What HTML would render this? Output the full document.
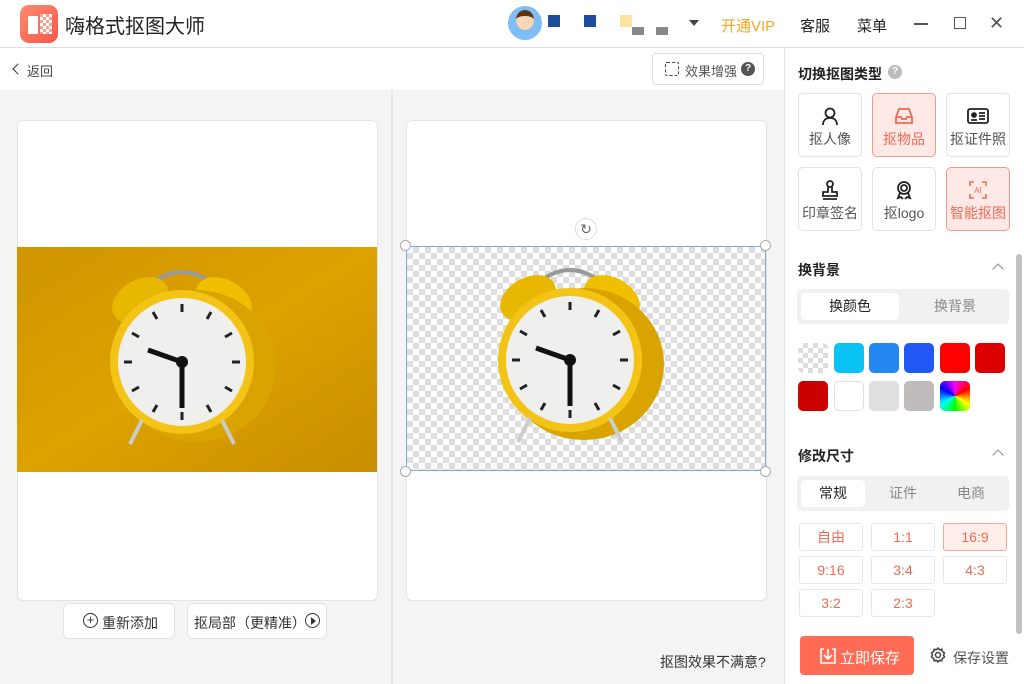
<!DOCTYPE html><html><head><meta charset="utf-8"><style>
*{box-sizing:border-box;margin:0;padding:0}
body{width:1024px;height:684px;overflow:hidden;font-family:"Liberation Sans","Noto Sans CJK SC",sans-serif;background:#fff;position:relative;color:#333}
.a{position:absolute}
.card{background:#fff;border:1px solid #e3e3e3;border-radius:6px}
.type{position:absolute;width:64px;height:64px;border:1px solid #e2e2e2;border-radius:5px;background:#fff;font-size:14px;color:#555;text-align:center}
.type.on{background:#fee9e6;border-color:#f59a8c;color:#f06a55}
.type svg{display:block;margin:12px auto 3px}
.sw{position:absolute;width:30px;height:30px;border-radius:5px}
.sz{position:absolute;width:64px;height:28px;border:1px solid #e8e8e8;border-radius:3px;color:#f06a55;font-size:14px;text-align:center;line-height:26px;background:#fff}
.seg{position:absolute;background:#f1f1f1;border-radius:5px;height:35px;width:212px;left:797px}
.seg div{position:absolute;top:4px;height:27px;line-height:27px;text-align:center;font-size:14px;color:#888}
.seg .s{background:#fff;border-radius:5px;color:#222}
.h{position:absolute;left:798px;font-size:14px;font-weight:bold;color:#222}
.chev{position:absolute;left:994px;width:8px;height:8px;border-left:1.5px solid #888;border-top:1.5px solid #888;transform:rotate(45deg)}
</style></head><body>
<svg width="0" height="0" style="position:absolute"><defs>
<g id="clk">
<path d="M-40,-70 Q0,-110 40,-70" stroke="#999" stroke-width="4" fill="none"/>
<ellipse cx="-42" cy="-62" rx="30" ry="20" fill="#e8b800" transform="rotate(-30 -42 -62)"/>
<ellipse cx="42" cy="-62" rx="30" ry="20" fill="#f0c000" transform="rotate(30 42 -62)"/>
<ellipse cx="14" cy="4" rx="80" ry="76" fill="#d9a400"/>
<circle r="72" fill="#f3c316"/>
<circle r="64" fill="#efefed"/>
<g stroke="#222" stroke-width="3">
<line x1="0" y1="-58" x2="0" y2="-50"/><line x1="0" y1="50" x2="0" y2="58"/><line x1="-58" y1="0" x2="-50" y2="0"/><line x1="50" y1="0" x2="58" y2="0"/>
<line x1="29" y1="-50" x2="25" y2="-43"/><line x1="50" y1="-29" x2="43" y2="-25"/><line x1="-29" y1="50" x2="-25" y2="43"/><line x1="-50" y1="29" x2="-43" y2="25"/>
<line x1="29" y1="50" x2="25" y2="43"/><line x1="50" y1="29" x2="43" y2="25"/><line x1="-29" y1="-50" x2="-25" y2="-43"/><line x1="-50" y1="-29" x2="-43" y2="-25"/>
</g>
<line x1="0" y1="0" x2="-34" y2="-12" stroke="#111" stroke-width="5"/>
<line x1="0" y1="0" x2="0" y2="46" stroke="#111" stroke-width="5"/>
<circle r="6" fill="#111"/>
<line x1="-40" y1="58" x2="-52" y2="82" stroke="#ccc" stroke-width="4"/>
<line x1="40" y1="58" x2="52" y2="82" stroke="#ccc" stroke-width="4"/>
</g></defs></svg>

<!-- title bar -->
<div class="a" style="left:20px;top:5px;width:38px;height:38px;border-radius:9px;background:linear-gradient(135deg,#ff8a6e,#f5584a)"></div>
<div class="a" style="left:28px;top:16px;width:10px;height:18px;background:#fff;border-radius:1px"></div>
<div class="a" style="left:40px;top:14px;width:12px;height:20px;background:repeating-conic-gradient(#fff 0 25%,#f9a08f 0 50%) 0 0/6px 6px"></div>
<div class="a" style="left:65px;top:10px;font-size:20px;color:#222">嗨格式抠图大师</div>
<div class="a" style="left:508px;top:6px;width:34px;height:34px;border-radius:50%;background:#7fbdf5"></div>
<div class="a" style="left:516px;top:10px;width:18px;height:20px;border-radius:50%;background:#f4d6b8;border-top:6px solid #5a3413"></div>
<div class="a" style="left:548px;top:15px;width:12px;height:12px;background:#1d4c9a"></div>
<div class="a" style="left:584px;top:15px;width:12px;height:12px;background:#1d4c9a"></div>
<div class="a" style="left:620px;top:15px;width:12px;height:12px;background:#ffe2a0"></div>
<div class="a" style="left:632px;top:27px;width:12px;height:8px;background:#888"></div>
<div class="a" style="left:656px;top:27px;width:12px;height:8px;background:#888"></div>
<div class="a" style="left:689px;top:20px;border:5px solid transparent;border-top:6px solid #444"></div>
<div class="a" style="left:721px;top:15px;font-size:15px;color:#f5a623">开通VIP</div>
<div class="a" style="left:800px;top:15px;font-size:15px;color:#222">客服</div>
<div class="a" style="left:857px;top:15px;font-size:15px;color:#222">菜单</div>
<div class="a" style="left:914px;top:23px;width:14px;height:1.5px;background:#555"></div>
<div class="a" style="left:954px;top:17px;width:12px;height:12px;border:1.5px solid #555"></div>
<div class="a" style="left:989px;top:13px;font-size:18px;color:#555">✕</div>
<div class="a" style="left:0;top:47px;width:1024px;height:1px;background:#ddd"></div>

<!-- toolbar -->
<div class="a" style="left:14px;top:65px;width:8px;height:8px;border-left:1.5px solid #333;border-bottom:1.5px solid #333;transform:rotate(45deg)"></div>
<div class="a" style="left:27px;top:61px;font-size:13px;color:#444">返回</div>
<div class="a" style="left:652px;top:53px;width:112px;height:32px;border:1px solid #ddd;border-radius:4px;font-size:13px;color:#555;padding:7px 0 0 32px">效果增强</div>
<div class="a" style="left:665px;top:62px;width:14px;height:14px;border:1.5px dashed #444;border-radius:2px"></div>
<div class="a" style="left:741px;top:62px;width:14px;height:14px;border-radius:50%;background:#555;color:#fff;font-size:10px;text-align:center;line-height:14px;font-weight:bold">?</div>

<!-- work area -->
<div class="a" style="left:0;top:90px;width:784px;height:594px;background:#f4f4f4"></div>
<div class="a" style="left:391px;top:90px;width:2px;height:594px;background:#e6e6e6"></div>
<div class="a card" style="left:17px;top:120px;width:361px;height:481px"></div>
<svg class="a" style="left:17px;top:247px" width="360" height="225"><defs><linearGradient id="bg" x1="0" y1="0" x2="1" y2="1"><stop offset="0" stop-color="#d09500"/><stop offset=".5" stop-color="#dca200"/><stop offset="1" stop-color="#c98e00"/></linearGradient></defs><rect width="360" height="225" fill="url(#bg)"/><use href="#clk" x="165" y="115"/></svg>
<div class="a card" style="left:406px;top:120px;width:361px;height:481px"></div>
<div class="a" style="left:406px;top:246px;width:360px;height:225px;border:1px solid #7aa8e8;background:repeating-conic-gradient(#ddd 0 25%,#fff 0 50%) 0 0/12px 12px"></div>
<svg class="a" style="left:406px;top:247px" width="360" height="225"><use href="#clk" x="164" y="113"/></svg>
<div class="a" style="left:400px;top:240px;width:11px;height:11px;border-radius:50%;background:#fff;border:1px solid #aaa"></div>
<div class="a" style="left:760px;top:240px;width:11px;height:11px;border-radius:50%;background:#fff;border:1px solid #aaa"></div>
<div class="a" style="left:400px;top:466px;width:11px;height:11px;border-radius:50%;background:#fff;border:1px solid #aaa"></div>
<div class="a" style="left:760px;top:466px;width:11px;height:11px;border-radius:50%;background:#fff;border:1px solid #aaa"></div>
<div class="a" style="left:575px;top:218px;width:22px;height:22px;border-radius:50%;background:#fff;border:1px solid #ddd;text-align:center;line-height:20px;font-size:14px;color:#666">↻</div>

<div class="a card" style="left:63px;top:603px;width:112px;height:36px;font-size:14px;color:#333;padding:9px 0 0 38px">重新添加</div>
<div class="a" style="left:83px;top:613px;width:15px;height:15px;border:1.5px solid #333;border-radius:50%;text-align:center;line-height:11px;font-size:13px">+</div>
<div class="a card" style="left:187px;top:603px;width:140px;height:36px;font-size:14px;color:#333;padding:9px 0 0 6px">抠局部（更精准）</div>
<div class="a" style="left:305px;top:613px;width:15px;height:15px;border:1.5px solid #333;border-radius:50%"></div>
<div class="a" style="left:311px;top:617px;border:4px solid transparent;border-left:5px solid #333"></div>
<div class="a" style="left:660px;top:652px;font-size:14px;color:#333">抠图效果不满意?</div>

<!-- right panel -->
<div class="a" style="left:784px;top:48px;width:1px;height:636px;background:#e6e6e6"></div>
<div class="a" style="left:1016px;top:254px;width:6px;height:380px;background:#c1c1c1;border-radius:3px"></div>
<div class="h" style="top:64px">切换抠图类型</div>
<div class="a" style="left:888px;top:65px;width:14px;height:14px;border-radius:50%;background:#bbb;color:#fff;font-size:10px;text-align:center;line-height:14px;font-weight:bold">?</div>

<div class="type" style="left:798px;top:93px"><svg width="20" height="20" viewBox="0 0 20 20" fill="none" stroke="#222" stroke-width="1.8"><circle cx="10" cy="7" r="4.5"/><path d="M3 19c0-5 3-7 7-7s7 2 7 7"/></svg>抠人像</div>
<div class="type on" style="left:872px;top:93px"><svg width="20" height="20" viewBox="0 0 20 20" fill="none" stroke="#f06a55" stroke-width="1.8"><path d="M2 11l3-8h10l3 8v6H2z M2 11h5l1 2h4l1-2h5"/></svg>抠物品</div>
<div class="type" style="left:946px;top:93px"><svg width="22" height="20" viewBox="0 0 22 20" fill="none" stroke="#222" stroke-width="1.8"><rect x="1" y="3" width="20" height="14" rx="2"/><circle cx="7" cy="9" r="2" fill="#222"/><path d="M4 14h6M12 7h6M12 10h6M12 13h6"/></svg>抠证件照</div>
<div class="type" style="left:798px;top:167px"><svg width="20" height="20" viewBox="0 0 20 20" fill="none" stroke="#222" stroke-width="1.8"><circle cx="10" cy="4" r="3"/><path d="M8 7v5H3v4h14v-4h-5V7M3 19h14"/></svg>印章签名</div>
<div class="type" style="left:872px;top:167px"><svg width="20" height="20" viewBox="0 0 20 20" fill="none" stroke="#222" stroke-width="1.8"><circle cx="10" cy="8" r="6"/><circle cx="10" cy="8" r="3"/><path d="M6 13l-2 5 3-1 2 2M14 13l2 5-3-1-2 2"/></svg>抠logo</div>
<div class="type on" style="left:946px;top:167px"><svg width="20" height="20" viewBox="0 0 20 20" fill="none" stroke="#f06a55" stroke-width="1.6"><path d="M2 6V2h4M14 2h4v4M18 14v4h-4M6 18H2v-4"/><text x="10" y="13" font-size="8" text-anchor="middle" fill="#f06a55" stroke="none" font-family="Liberation Sans">AI</text></svg>智能抠图</div>

<div class="h" style="top:260px">换背景</div><div class="chev" style="top:265px"></div>
<div class="seg" style="top:289px"><div class="s" style="left:4px;width:98px">换颜色</div><div style="left:108px;width:100px">换背景</div></div>
<div class="sw" style="left:798px;top:343px;background:repeating-conic-gradient(#ddd 0 25%,#fff 0 50%) 0 0/10px 10px"></div>
<div class="sw" style="left:834px;top:343px;background:#0bc2f5"></div>
<div class="sw" style="left:869px;top:343px;background:#2488f3"></div>
<div class="sw" style="left:904px;top:343px;background:#2157f5"></div>
<div class="sw" style="left:940px;top:343px;background:#fe0000"></div>
<div class="sw" style="left:975px;top:343px;background:#dd0000"></div>
<div class="sw" style="left:798px;top:381px;background:#cc0000"></div>
<div class="sw" style="left:834px;top:381px;background:#fff;border:1px solid #e0e0e0"></div>
<div class="sw" style="left:869px;top:381px;background:#e0e0e0"></div>
<div class="sw" style="left:904px;top:381px;background:#bfbbbb"></div>
<div class="sw" style="left:940px;top:381px;background:conic-gradient(from 0deg,#f0f,#f00,#ff0,#0f0,#0ff,#00f,#f0f)"></div>

<div class="h" style="top:446px">修改尺寸</div><div class="chev" style="top:451px"></div>
<div class="seg" style="top:476px"><div class="s" style="left:4px;width:64px">常规</div><div style="left:72px;width:68px">证件</div><div style="left:140px;width:68px">电商</div></div>
<div class="sz" style="left:799px;top:523px">自由</div>
<div class="sz" style="left:871px;top:523px">1:1</div>
<div class="sz" style="left:943px;top:523px;background:#fdeeea;border-color:#f5a898">16:9</div>
<div class="sz" style="left:799px;top:556px">9:16</div>
<div class="sz" style="left:871px;top:556px">3:4</div>
<div class="sz" style="left:943px;top:556px">4:3</div>
<div class="sz" style="left:799px;top:589px">3:2</div>
<div class="sz" style="left:871px;top:589px">2:3</div>

<div class="a" style="left:800px;top:636px;width:114px;height:39px;background:#ff6b55;border-radius:4px;color:#fff;font-size:15px;padding:11px 0 0 40px">立即保存</div>
<svg class="a" style="left:819px;top:647px" width="18" height="18" viewBox="0 0 18 18" fill="none" stroke="#fff" stroke-width="1.6"><path d="M5 2H2v14h14V2h-3M9 2v9M5 8l4 4 4-4"/></svg>
<svg class="a" style="left:930px;top:647px" width="16" height="16" viewBox="0 0 16 16" fill="none" stroke="#444" stroke-width="1.5"><circle cx="8" cy="8" r="2.5"/><path d="M8 1l1.5 1.8 2.3-.6.6 2.3L14.5 6l-1 2 1 2-2.1 1.5-.6 2.3-2.3-.6L8 15l-1.5-1.8-2.3.6-.6-2.3L1.5 10l1-2-1-2 2.1-1.5.6-2.3 2.3.6z"/></svg>
<div class="a" style="left:953px;top:648px;font-size:14px;color:#555">保存设置</div>
</body></html>
